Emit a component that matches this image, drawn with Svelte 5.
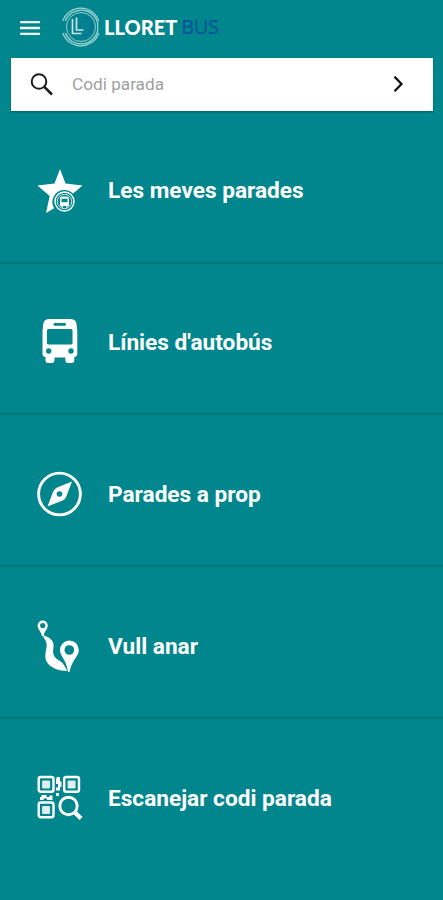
<script>
    const items = [
        {icon: 'star', label: 'Les meves parades'},
        {icon: 'bus', label: "Línies d'autobús"},
        {icon: 'compass', label: 'Parades a prop'},
        {icon: 'route', label: 'Vull anar'},
        {icon: 'qr', label: 'Escanejar codi parada'}
    ];

    let code = $state('');
</script>

<div class="app">
    <header>
        <button class="menu" aria-label="Menú">
            <svg width="20" height="14" viewBox="0 0 20 14">
                <path d="M0 1.2h20M0 7h20M0 12.8h20" stroke="#eefafa" stroke-width="2.3"/>
            </svg>
        </button>
        <div class="brand">
            <svg width="40" height="40" viewBox="0 0 40 40" fill="none">
                <circle cx="20" cy="20" r="13" fill="#04818f"/>
                <g stroke="#a5d5d8" stroke-width="1.2">
                    <path d="M1.8 14a19 19 0 0 1 36 0M1.8 26a19 19 0 0 0 36 0"/>
                    <path d="M4.2 14a17 17 0 0 1 32.5 2.5v7a17 17 0 0 1-32.5 2.5"/>
                    <circle cx="20" cy="20" r="14.500" stroke-width=".9"/>
                </g>
                <path d="M11.500 12v14.500h9M15.500 10.500v12.500h7" stroke="#c5e5e7" stroke-width="1.700"/>
                <path d="M22 11h2q6.500 1 6.500 9t-6.500 8h-2" stroke="#057295" stroke-width="1.500"/>
            </svg>
            <span class="lloret">LLORET</span>
            <span class="bus">BUS</span>
        </div>
    </header>

    <form class="search" onsubmit={(e) => e.preventDefault()}>
        <svg width="24" height="24" viewBox="0 0 24 24" fill="none" stroke="#1c1c1c">
            <circle cx="9" cy="8.5" r="7.3" stroke-width="2"/>
            <path d="M14.3 13.8l7.7 7.7" stroke-width="2.6"/>
        </svg>
        <input bind:value={code} placeholder="Codi parada"/>
        <button aria-label="Cercar">
            <svg width="12" height="18" viewBox="0 0 12 18">
                <path d="M1.5 .7L8.5 8L1.5 15.3" fill="none" stroke="#111" stroke-width="2.3"/>
            </svg>
        </button>
    </form>

    <nav>
        {#each items as item}
            <button class="item">
                <svg class="icon" viewBox="0 0 52 56" fill="#fff">
                    {#if item.icon === 'star'}
                        <path d="M26 7l5.5 14.5 17 2-13 11 4 16.5-13.5-8-14 8 3.7-17L3.5 23.5l17-2z"/>
                        <path class="bg" d="M30.5 28a12 12 0 0 1 12 12v12H20V46a12 12 0 0 1 10.5-18z"/>
                        <circle cx="30.5" cy="39.5" r="9.5" fill="none" stroke="#fff" stroke-width="1.4"/>
                        <circle cx="30.5" cy="39.5" r="7.2" fill="none" stroke="#fff" stroke-width=".8"/>
                        <path d="M27.500 34.500h6l1.500 1.500v8h-1.500v1.500H32V44h-3v1.500h-1.500V44H26v-8z"/>
                        <path class="bg" d="M27.500 36.700h6v3.500h-6z"/>
                    {:else if item.icon === 'bus'}
                        <path d="M14.5 5h22.5q5 .5 5.5 5l.8 7v23q0 2.5-3 3v3.5q0 2.5-3 2.5h-3q-3 0-3-3v-2.5H20.5V46q0 3-3 3h-3q-3 0-3-2.5V43q-3-.5-3-3V17l.8-7q.5-4.5 5.2-5z"/>
                        <path class="bg" d="M14 15h23.5l1 1v13.5l-1 1H14l-1-1V16z"/>
                        <rect class="bg" x="19.5" y="9" width="12.5" height="2.8" rx="1.4"/>
                        <circle class="bg" cx="14.7" cy="37" r="2.7"/>
                        <circle class="bg" cx="37" cy="37" r="2.7"/>
                    {:else if item.icon === 'compass'}
                        <circle cx="25.5" cy="28" r="20.9" fill="none" stroke="#fff" stroke-width="2.9"/>
                        <path d="M38 15.5L32.5 30q-1 3-4 4.5L13.5 40.5 19 26q1-3 4-4.5z"/>
                        <circle class="bg" cx="25.5" cy="28" r="2.8"/>
                    {:else if item.icon === 'route'}
                        <path d="M8.7 2.500a5 5 0 0 1 5.1 5c0 3.5-3 5-4.3 10.5H8C6.600 12.500 3.600 11 3.600 7.500a5 5 0 0 1 5.100-5z"/>
                        <circle class="bg" cx="8.7" cy="7.500" r="2.6"/>
                        <path d="M8.5 17C14 18.500 19 21.500 19.500 26.500c.3 4-1.300 7.500.7 11.500 2.200 4 6.500 4.500 8.800 7.500l4.500 7.500C25 53 16 50 12.500 43.500c-3-7 1-13 0-18-.6-3.700-2.800-5-4-8.500z"/>
                        <path d="M35.3 22.500a9.500 9.500 0 0 1 9.500 9.700c0 6.300-6.800 9.300-9.300 21.800h-1.500C32.500 41.500 26 38.500 26 32.200A9.500 9.500 0 0 1 35.300 22.500z"/>
                        <circle class="bg" cx="35.3" cy="32" r="4.8"/>
                    {:else}
                        <g fill="none" stroke="#fff" stroke-width="2.4">
                            <rect x="4.7" y="7" width="14.8" height="14.8" rx="2"/>
                            <rect x="30.2" y="7" width="14.8" height="14.8" rx="2"/>
                            <rect x="4.7" y="32.5" width="14.8" height="14.8" rx="2"/>
                        </g>
                        <path d="M8.6 11h7v7h-7zM34.1 11h7v7h-7zM8.6 36.5h7v7h-7z" opacity=".88" stroke="#fff" stroke-width=".9"/>
                        <path d="M22.5 7h3.500v4.500h1.500V17H26v3.500h-4V17.500h2V14h-2V9h.5zM22 23h3v3h-3zM7.500 25h5v2h3v-1.500h3V30H13v-1.500H9.500V30H6v-3h1.500z"/>
                        <circle cx="34.5" cy="36" r="8.7" fill="none" stroke="#fff" stroke-width="2.9"/>
                        <path d="M41 42.5l6 6" stroke="#fff" stroke-width="4.2"/>
                    {/if}
                </svg>
                <span>{item.label}</span>
            </button>
        {/each}
    </nav>
</div>

<style>
    :global(body) {
        background: #00868c;
    }

    .app {
        height: 900px;
        overflow: hidden;
        background: #00868c;
        font-family: Roboto, "Liberation Sans", sans-serif;
    }

    button {
        display: flex;
        margin: 0;
        padding: 0;
        border: 0;
        background: none;
    }

    header {
        display: flex;
        align-items: center;
        height: 58px;
        padding: 0 0 4px 20px;
        box-sizing: border-box;
    }

    .menu {
        margin-top: 2px;
    }

    .brand {
        display: flex;
        align-items: center;
        margin-left: 21px;
    }

    .lloret {
        margin-left: 3px;
        color: #fff;
        font: 900 20px/24px Lato, sans-serif;
    }

    .bus {
        margin-left: 4px;
        color: #074f9c;
        font: 400 20px/24px "Open Sans", sans-serif;
        letter-spacing: -0.3px;
    }

    .search {
        display: flex;
        align-items: center;
        height: 53px;
        margin: 0 10px 0 11px;
        padding: 0 28px 0 19px;
        box-sizing: border-box;
        background: #fff;
        box-shadow: 0 1px 2px rgba(0, 0, 0, 0.3);
    }

    .search input {
        flex: 1;
        min-width: 0;
        margin: 0 0 1px 18px;
        padding: 0;
        border: 0;
        outline: 0;
        font: 400 17.2px/24px Roboto, sans-serif;
    }

    .search input::placeholder {
        color: #a0a0a0;
        opacity: 1;
    }

    .item {
        align-items: center;
        width: 100%;
        height: 151.8px;
        padding: 7px 0 0 34px;
        box-sizing: border-box;
        border-bottom: 2px solid #00777d;
        color: #fff;
        font: 700 22.65px/28px Roboto, sans-serif;
        text-align: left;
    }

    .item:first-child {
        height: 152.6px;
    }

    .item:last-child {
        border-bottom: 0;
    }

    .item span {
        padding-top: 2px;
    }

    .icon {
        width: 52px;
        height: 56px;
        margin-right: 22px;
    }

    .bg {
        fill: #00868c;
    }
</style>
